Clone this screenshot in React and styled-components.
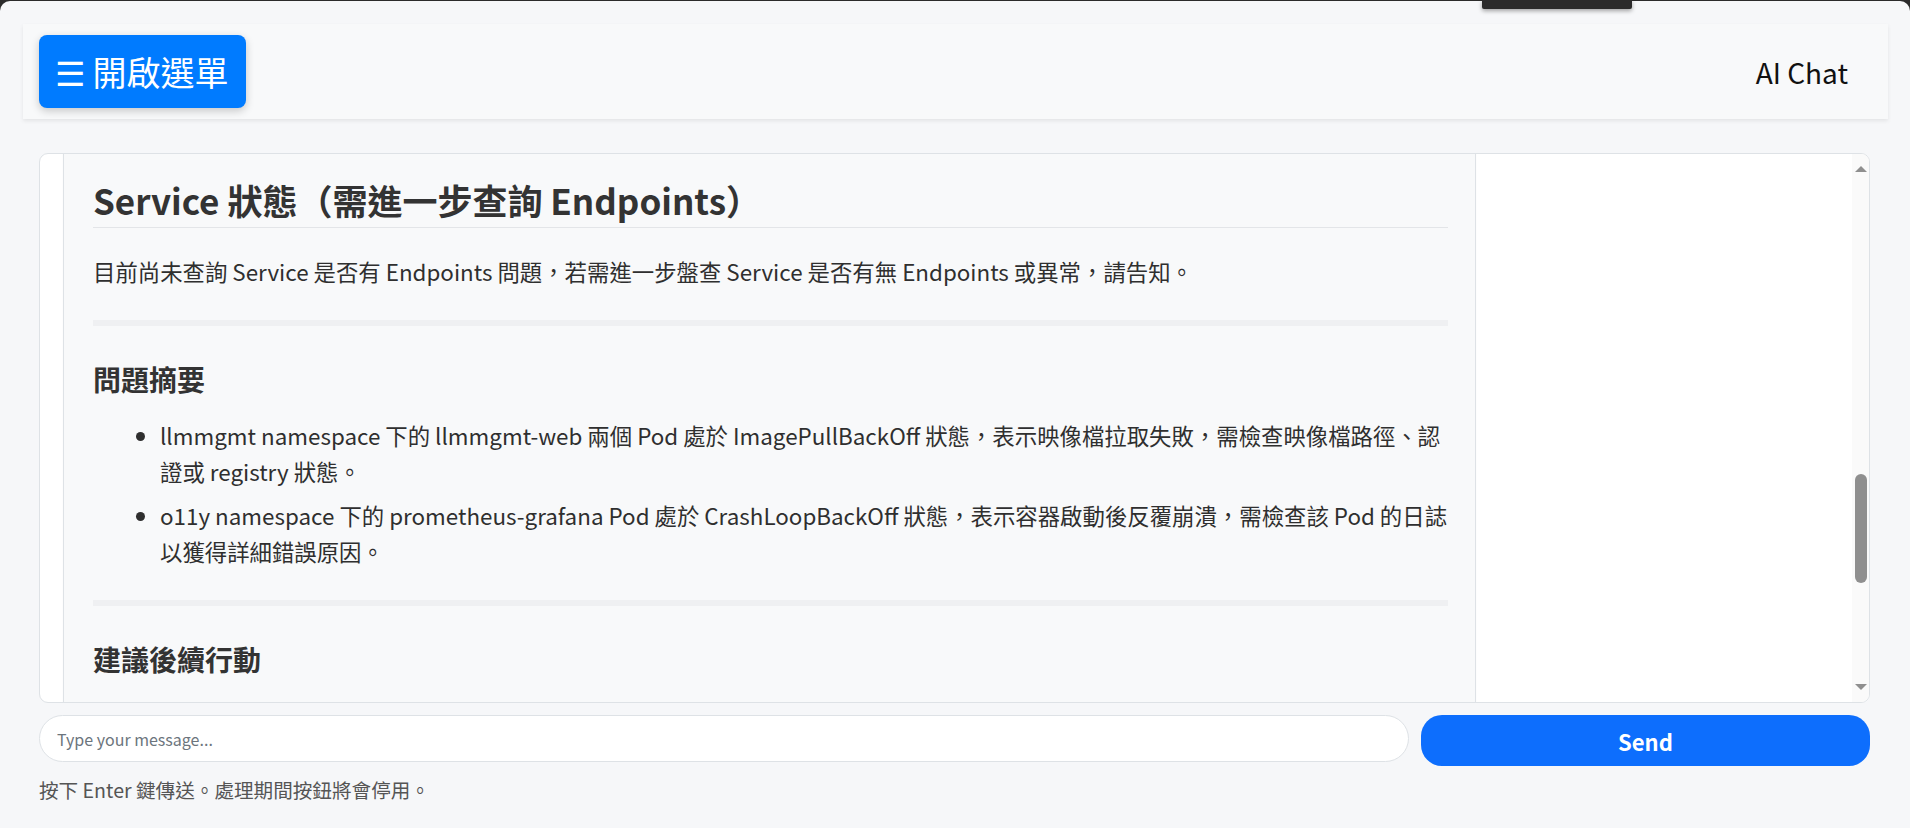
import React, { useLayoutEffect, useRef, useState } from 'react';
import styled, { createGlobalStyle } from 'styled-components';

const GlobalStyle = createGlobalStyle`
  html, body {
    margin: 0;
    padding: 0;
    background: #2b2b2b;
  }
  body {
    padding-top: 1px;
    font-family: "Noto Sans CJK TC", "Noto Sans", sans-serif;
    color: #333;
  }
  * {
    box-sizing: border-box;
  }
`;

const Page = styled.div`
  position: relative;
  min-height: calc(100vh - 1px);
  background: #f6f7f9;
  border-radius: 10px 10px 0 0;
  padding: 23px 22px 0 23px;
`;

const TopTab = styled.div`
  position: absolute;
  top: -1px;
  left: 1482px;
  width: 150px;
  height: 9px;
  background: #2b2b2b;
  border-radius: 0 0 2px 2px;
  box-shadow: 0 2px 4px rgba(0, 0, 0, 0.35);
`;

const Header = styled.header`
  display: flex;
  align-items: center;
  justify-content: space-between;
  height: 95px;
  padding: 0 40px 0 16px;
  background: #f8f9fa;
  box-shadow: 0 2px 4px rgba(0, 0, 0, 0.08);
`;

const MenuButton = styled.button`
  display: flex;
  align-items: center;
  gap: 8px;
  height: 73px;
  padding: 0 17px 0 16px;
  border: none;
  border-radius: 8px;
  background: #007bff;
  color: #fff;
  font-family: inherit;
  font-size: 34px;
  box-shadow: 0 3px 8px rgba(0, 0, 0, 0.2);
`;

const Brand = styled.div`
  font-size: 28px;
  color: #111;
`;

const Main = styled.main`
  padding: 34px 18px 0 16px;
`;

const ChatFrame = styled.div`
  display: flex;
  height: 550px;
  background: #fff;
  border: 1px solid #dee2e6;
  border-radius: 9px;
  overflow: hidden;
`;

const ChatScroll = styled.div`
  flex: 1;
  min-width: 0;
  overflow-y: auto;
  scrollbar-width: none;
  padding: 20px 23px;
  display: flex;
  flex-direction: column;
  gap: 20px;
`;

const Rail = styled.div`
  flex: 0 0 17px;
  display: flex;
  flex-direction: column;
  background: #fafafa;
`;

const RailArrow = styled.div`
  flex: 0 0 30px;
  display: flex;
  align-items: center;
  justify-content: center;

  &::before {
    content: '';
    border-left: 6px solid transparent;
    border-right: 6px solid transparent;
    border-top: ${p => (p.$down ? '6px solid #8f8f8f' : 'none')};
    border-bottom: ${p => (p.$down ? 'none' : '6px solid #8f8f8f')};
  }
`;

const RailTrack = styled.div`
  position: relative;
  flex: 1;
`;

const Thumb = styled.div`
  position: absolute;
  left: 3px;
  right: 2px;
  border-radius: 6px;
  background: #8f8f8f;
`;

const UserBubble = styled.div`
  align-self: flex-end;
  max-width: 80%;
  padding: 12px 20px;
  border-radius: 12px;
  background: #007bff;
  color: #fff;
  font-size: 22.4px;
  line-height: 36px;
`;

const BotBubble = styled.div`
  flex-shrink: 0;
  align-self: flex-start;
  width: 80%;
  padding: 24px 27px 24px 29px;
  border: 1px solid #dee2e6;
  border-radius: 8px;
  background: #f8f9fa;
  box-shadow: 0 1px 2px rgba(0, 0, 0, 0.04);
  font-size: 22.4px;
  line-height: 36px;
  color: #2f2f2f;
`;

const H2 = styled.h2`
  margin: 0 0 25px;
  padding-bottom: 6px;
  border-bottom: 1px solid #e3e5e8;
  font-size: 35px;
  line-height: 42px;
  font-weight: 700;
  color: #333;
`;

const H3 = styled.h3`
  margin: 0 0 21px;
  font-size: 28px;
  line-height: 34px;
  font-weight: 700;
  color: #333;
`;

const Para = styled.p`
  margin: 0 0 31px;
`;

const List = styled.ul`
  margin: 0 0 31px;
  padding-left: 67px;

  li + li {
    margin-top: 8px;
  }
`;

const Rule = styled.hr`
  height: 6px;
  margin: 0 0 36px;
  border: none;
  background: #eff0f2;
`;

const InputRow = styled.div`
  display: flex;
  gap: 12px;
  margin-top: 12px;
`;

const MessageInput = styled.input`
  flex: 1;
  height: 47px;
  padding: 0 17px;
  border: 1px solid #dee2e6;
  border-radius: 24px;
  background: #fff;
  font-family: inherit;
  font-size: 16px;
  outline: none;

  &::placeholder {
    color: #6c757d;
  }
`;

const SendButton = styled.button`
  flex: 0 0 449px;
  height: 51px;
  border: none;
  border-radius: 21px;
  background: #0d6efd;
  color: #fff;
  font-family: inherit;
  font-size: 22px;
  font-weight: 700;
`;

const Hint = styled.p`
  margin: 10px 0 0;
  font-size: 19.6px;
  line-height: 28px;
  color: #555;
`;

const App = () => {
  const boxRef = useRef(null);
  const headRef = useRef(null);
  const trackRef = useRef(null);
  const [thumb, setThumb] = useState({ top: 0, height: 0 });

  useLayoutEffect(() => {
    const place = () => {
      const box = boxRef.current;
      const head = headRef.current;
      const track = trackRef.current;
      if (!box || !head || !track) return;
      const offset = head.getBoundingClientRect().top - box.getBoundingClientRect().top;
      box.scrollTop += offset - 25;
      const trackH = track.clientHeight;
      const h = Math.max(20, (trackH * box.clientHeight) / box.scrollHeight);
      const range = box.scrollHeight - box.clientHeight;
      const top = range > 0 ? ((trackH - h) * box.scrollTop) / range : 0;
      setThumb({ top, height: h });
    };
    place();
    if (document.fonts) document.fonts.ready.then(place);
  }, []);

  return (
    <Page>
      <GlobalStyle />
      <TopTab />
      <Header>
        <MenuButton>☰ 開啟選單</MenuButton>
        <Brand>AI Chat</Brand>
      </Header>
      <Main>
        <ChatFrame>
          <ChatScroll ref={boxRef}>
            <UserBubble>
              請幫我檢查目前 Kubernetes 叢集中所有 namespace 的 Pod 與 Service 狀態，找出異常的項目並說明原因。
            </UserBubble>
            <BotBubble>
              <H2>Kubernetes 叢集健康檢查報告</H2>
              <Para>
                已透過 kubectl 查詢叢集內所有 namespace 的 Pod、Node 與 Service 資源，以下依資源類型整理檢查結果，並標示需要注意的異常項目與可能原因。
              </Para>
              <Rule />
              <H2>叢集 Pod 狀態檢查結果</H2>
              <Para>以下為各 namespace 中狀態異常的 Pod 清單，其餘 Pod 均為 Running 狀態。</Para>
              <Rule />
              <H2>llmmgmt namespace</H2>
              <List>
                <li>llmmgmt-web-6d8f9c7b5-2xkqp：ImagePullBackOff，重啟次數 0。</li>
                <li>llmmgmt-web-6d8f9c7b5-9tzlm：ImagePullBackOff，重啟次數 0。</li>
                <li>事件訊息顯示無法從 registry 拉取指定的映像檔標籤。</li>
              </List>
              <Rule />
              <H2>o11y namespace</H2>
              <List>
                <li>prometheus-grafana-7c9d8b6f4-kx2vn：CrashLoopBackOff，重啟次數 27。</li>
                <li>容器啟動後立即結束，Exit Code 為 1。</li>
              </List>
              <Rule />
              <H2>kube-system namespace</H2>
              <List>
                <li>coredns、kube-proxy、metrics-server 等系統元件皆為 Running 狀態。</li>
                <li>近 24 小時內無異常重啟紀錄。</li>
                <li>未發現 Pending 或 Evicted 的 Pod。</li>
              </List>
              <Rule />
              <H2>Node 狀態</H2>
              <Para>所有 Node 均為 Ready 狀態，未發現 MemoryPressure 或 DiskPressure 相關警告。</Para>
              <Rule />
              <H2 ref={headRef}>Service 狀態（需進一步查詢 Endpoints）</H2>
              <Para>
                目前尚未查詢 Service 是否有 Endpoints 問題，若需進一步盤查 Service 是否有無 Endpoints 或異常，請告知。
              </Para>
              <Rule />
              <H3>問題摘要</H3>
              <List>
                <li>
                  llmmgmt namespace 下的 llmmgmt-web 兩個 Pod 處於 ImagePullBackOff 狀態，表示映像檔拉取失敗，需檢查映像檔路徑、認證或 registry 狀態。
                </li>
                <li>
                  o11y namespace 下的 prometheus-grafana Pod 處於 CrashLoopBackOff 狀態，表示容器啟動後反覆崩潰，需檢查該 Pod 的日誌以獲得詳細錯誤原因。
                </li>
              </List>
              <Rule />
              <H3>建議後續行動</H3>
              <List>
                <li>使用 kubectl describe pod 查看 llmmgmt-web 的事件，確認映像檔名稱與標籤是否正確。</li>
                <li>確認 imagePullSecrets 設定是否正確，以及 registry 是否可正常連線。</li>
                <li>使用 kubectl logs --previous 查看 prometheus-grafana 崩潰前的日誌。</li>
                <li>檢查 prometheus-grafana 的 ConfigMap 與 Secret 是否有設定錯誤。</li>
                <li>如需進一步協助，請提供相關日誌或事件輸出。</li>
              </List>
              <Rule />
              <H3>備註</H3>
              <Para>以上結果為查詢當下的快照，狀態可能隨時間變化，建議定期重新檢查。</Para>
            </BotBubble>
          </ChatScroll>
          <Rail>
            <RailArrow />
            <RailTrack ref={trackRef}>
              <Thumb style={{ top: thumb.top, height: thumb.height }} />
            </RailTrack>
            <RailArrow $down />
          </Rail>
        </ChatFrame>
        <InputRow>
          <MessageInput placeholder="Type your message..." />
          <SendButton>Send</SendButton>
        </InputRow>
        <Hint>按下 Enter 鍵傳送。處理期間按鈕將會停用。</Hint>
      </Main>
    </Page>
  );
};

export default App;
